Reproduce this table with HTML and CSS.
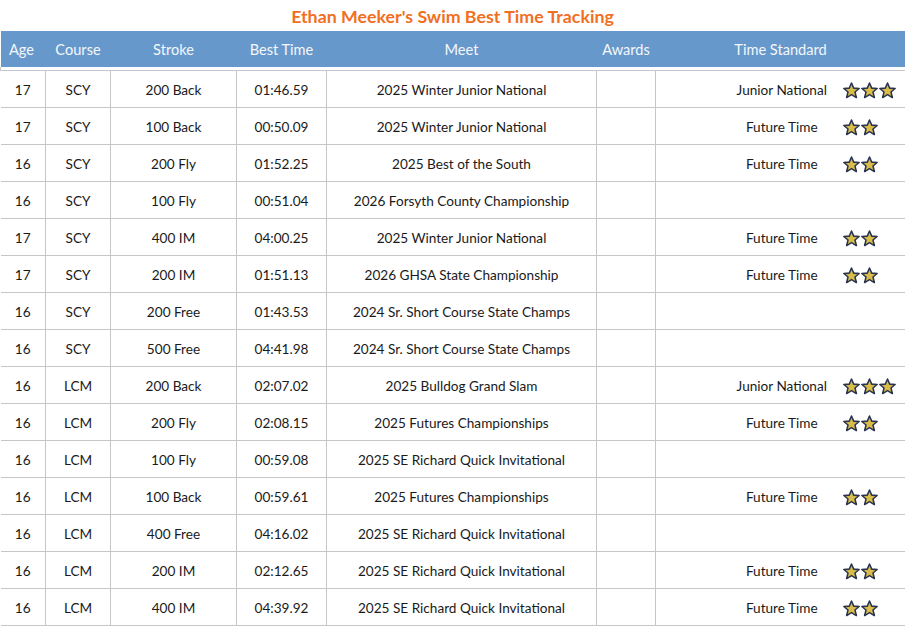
FILE: index.html
```html
<!DOCTYPE html>
<html>
<head>
<meta charset="utf-8">
<link rel="stylesheet" href="styles.css">
</head>
<body>
<svg width="0" height="0" class="defs">
  <defs>
    <symbol id="star" viewBox="0 0 20 20">
      <path d="M10 1.2 L12.6 7.2 L19 7.6 L14.1 11.8 L15.7 18.3 L10 14.8 L4.3 18.3 L5.9 11.8 L1 7.6 L7.4 7.2 Z" fill="#d9bd48" stroke="#2a3452" stroke-width="1.8" stroke-linejoin="round"/>
    </symbol>
  </defs>
</svg>
<h1 class="title">Ethan Meeker's Swim Best Time Tracking</h1>
<table class="grid">
  <colgroup>
    <col class="c-age"><col class="c-course"><col class="c-stroke"><col class="c-time"><col class="c-meet"><col class="c-awards"><col class="c-std"><col class="c-stars">
  </colgroup>
  <thead>
    <tr class="head">
      <th>Age</th><th>Course</th><th>Stroke</th><th>Best Time</th><th>Meet</th><th>Awards</th><th colspan="2">Time Standard</th>
    </tr>
    <tr class="gap"><td colspan="8"></td></tr>
  </thead>
  <tbody>
    <tr><td>17</td><td>SCY</td><td>200 Back</td><td>01:46.59</td><td>2025 Winter Junior National</td><td></td><td class="std">Junior National</td><td class="stars"><svg class="s"><use href="#star"/></svg><svg class="s"><use href="#star"/></svg><svg class="s"><use href="#star"/></svg></td></tr>
    <tr><td>17</td><td>SCY</td><td>100 Back</td><td>00:50.09</td><td>2025 Winter Junior National</td><td></td><td class="std">Future Time</td><td class="stars"><svg class="s"><use href="#star"/></svg><svg class="s"><use href="#star"/></svg></td></tr>
    <tr><td>16</td><td>SCY</td><td>200 Fly</td><td>01:52.25</td><td>2025 Best of the South</td><td></td><td class="std">Future Time</td><td class="stars"><svg class="s"><use href="#star"/></svg><svg class="s"><use href="#star"/></svg></td></tr>
    <tr><td>16</td><td>SCY</td><td>100 Fly</td><td>00:51.04</td><td>2026 Forsyth County Championship</td><td></td><td class="std"></td><td class="stars"></td></tr>
    <tr><td>17</td><td>SCY</td><td>400 IM</td><td>04:00.25</td><td>2025 Winter Junior National</td><td></td><td class="std">Future Time</td><td class="stars"><svg class="s"><use href="#star"/></svg><svg class="s"><use href="#star"/></svg></td></tr>
    <tr><td>17</td><td>SCY</td><td>200 IM</td><td>01:51.13</td><td>2026 GHSA State Championship</td><td></td><td class="std">Future Time</td><td class="stars"><svg class="s"><use href="#star"/></svg><svg class="s"><use href="#star"/></svg></td></tr>
    <tr><td>16</td><td>SCY</td><td>200 Free</td><td>01:43.53</td><td>2024 Sr. Short Course State Champs</td><td></td><td class="std"></td><td class="stars"></td></tr>
    <tr><td>16</td><td>SCY</td><td>500 Free</td><td>04:41.98</td><td>2024 Sr. Short Course State Champs</td><td></td><td class="std"></td><td class="stars"></td></tr>
    <tr><td>16</td><td>LCM</td><td>200 Back</td><td>02:07.02</td><td>2025 Bulldog Grand Slam</td><td></td><td class="std">Junior National</td><td class="stars"><svg class="s"><use href="#star"/></svg><svg class="s"><use href="#star"/></svg><svg class="s"><use href="#star"/></svg></td></tr>
    <tr><td>16</td><td>LCM</td><td>200 Fly</td><td>02:08.15</td><td>2025 Futures Championships</td><td></td><td class="std">Future Time</td><td class="stars"><svg class="s"><use href="#star"/></svg><svg class="s"><use href="#star"/></svg></td></tr>
    <tr><td>16</td><td>LCM</td><td>100 Fly</td><td>00:59.08</td><td>2025 SE Richard Quick Invitational</td><td></td><td class="std"></td><td class="stars"></td></tr>
    <tr><td>16</td><td>LCM</td><td>100 Back</td><td>00:59.61</td><td>2025 Futures Championships</td><td></td><td class="std">Future Time</td><td class="stars"><svg class="s"><use href="#star"/></svg><svg class="s"><use href="#star"/></svg></td></tr>
    <tr><td>16</td><td>LCM</td><td>400 Free</td><td>04:16.02</td><td>2025 SE Richard Quick Invitational</td><td></td><td class="std"></td><td class="stars"></td></tr>
    <tr><td>16</td><td>LCM</td><td>200 IM</td><td>02:12.65</td><td>2025 SE Richard Quick Invitational</td><td></td><td class="std">Future Time</td><td class="stars"><svg class="s"><use href="#star"/></svg><svg class="s"><use href="#star"/></svg></td></tr>
    <tr><td>16</td><td>LCM</td><td>400 IM</td><td>04:39.92</td><td>2025 SE Richard Quick Invitational</td><td></td><td class="std">Future Time</td><td class="stars"><svg class="s"><use href="#star"/></svg><svg class="s"><use href="#star"/></svg></td></tr>
  </tbody>
</table>
</body>
</html>
```
FILE: styles.css
```css
html, body {
  margin: 0;
  padding: 0;
  background: #ffffff;
  overflow: hidden;
}
body {
  width: 905px;
  height: 626px;
  font-family: "Lato", "Open Sans", sans-serif;
  color: #1a1a1a;
}
.defs {
  position: absolute;
  width: 0;
  height: 0;
}
.title {
  margin: 0;
  height: 31px;
  line-height: 32px;
  text-align: center;
  font-size: 17.8px;
  font-weight: 700;
  color: #f0701f;
}
.grid {
  width: 905px;
  border-collapse: collapse;
  table-layout: fixed;
  font-size: 13.6px;
}
.c-age { width: 45px; }
.c-course { width: 65px; }
.c-stroke { width: 126px; }
.c-time { width: 90px; }
.c-meet { width: 270px; }
.c-awards { width: 59px; }
.c-std { width: 180px; }
.c-stars { width: 70px; }
.head th {
  height: 36px;
  padding: 0;
  background: #6798cb;
  color: #f4f7fb;
  font-weight: 400;
  font-size: 14.6px;
  text-align: center;
}
.head th:first-child {
  padding-right: 3px;
}
.gap td {
  height: 3px;
  padding: 0;
  border-left: 1px solid #c6c6c6;
  border-right: 1px solid #c6c6c6;
}
tbody td {
  height: 34px;
  padding: 2px 0 0;
  text-align: center;
  border: 1px solid #c6c6c6;
  white-space: nowrap;
}
tbody td:first-child { border-left: none; }
tbody td.std {
  text-align: center;
  padding-left: 72px;
  border-right: none;
}
tbody td.stars {
  text-align: left;
  padding-left: 7px;
  border-left: none;
  border-right: none;
}
.s {
  width: 17px;
  height: 17px;
  vertical-align: -3px;
  margin-right: 1px;
}
```
